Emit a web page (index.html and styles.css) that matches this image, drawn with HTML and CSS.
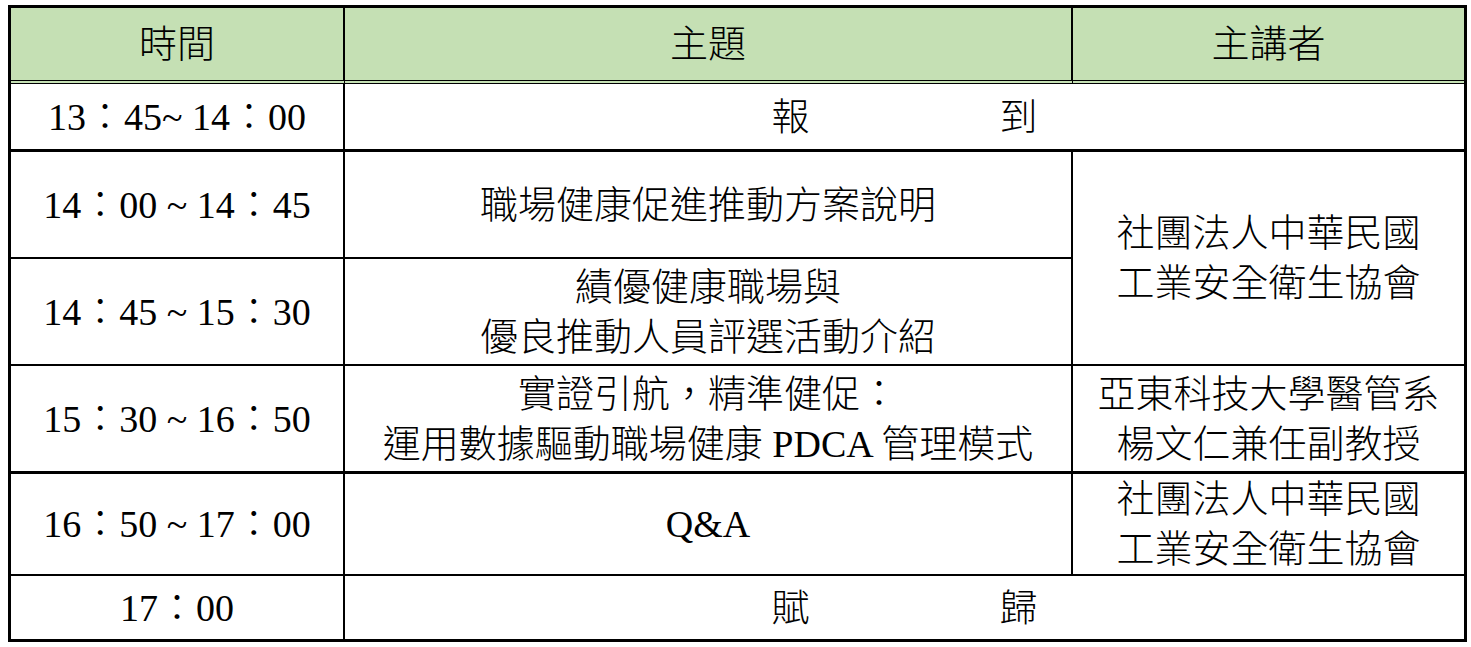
FILE: index.html
```html
<!DOCTYPE html>
<html lang="zh-Hant">
<head>
<meta charset="utf-8">
<title>議程</title>
<link rel="stylesheet" href="styles.css">
</head>
<body>
<div class="agenda">
  <div class="cell head c1">時間</div>
  <div class="cell head c2">主題</div>
  <div class="cell head c3">主講者</div>

  <div class="cell r1 c1">13：45~ 14：00</div>
  <div class="cell r1 wide">報　　　　　到</div>

  <div class="cell r2 c1">14：00 ~ 14：45</div>
  <div class="cell r2 c2">職場健康促進推動方案說明</div>
  <div class="cell c3 span2"><div>社團法人中華民國<br>工業安全衛生協會</div></div>

  <div class="cell r3 c1">14：45 ~ 15：30</div>
  <div class="cell r3 c2"><div>績優健康職場與<br>優良推動人員評選活動介紹</div></div>

  <div class="cell r4 c1">15：30 ~ 16：50</div>
  <div class="cell r4 c2"><div>實證引航，精準健促：<br>運用數據驅動職場健康 PDCA 管理模式</div></div>
  <div class="cell r4 c3"><div>亞東科技大學醫管系<br>楊文仁兼任副教授</div></div>

  <div class="cell r5 c1">16：50 ~ 17：00</div>
  <div class="cell r5 c2">Q&amp;A</div>
  <div class="cell r5 c3"><div>社團法人中華民國<br>工業安全衛生協會</div></div>

  <div class="cell r6 c1">17：00</div>
  <div class="cell r6 wide">賦　　　　　歸</div>
</div>
</body>
</html>
```

FILE: styles.css
```css
html, body {
  margin: 0;
  padding: 0;
  background: #ffffff;
}
body {
  padding: 5px 0 0 8px;
  font-family: "Liberation Serif", "Noto Sans CJK TC", serif;
  font-weight: 300;
  font-size: 38px;
  line-height: 50px;
  color: #000000;
}
.agenda {
  box-sizing: border-box;
  width: 1459px;
  border: 3px solid #000;
  display: grid;
  grid-template-columns: 334px 728px 391px;
  grid-template-rows: 76px 68px 107px 107px 108px 102px 63px;
}
.cell {
  box-sizing: border-box;
  display: flex;
  align-items: center;
  justify-content: center;
  text-align: center;
  white-space: nowrap;
}
.c1 {
  grid-column: 1;
  border-right: 2px solid #000;
}
.c2 {
  grid-column: 2;
  border-right: 2px solid #000;
}
.c3 {
  grid-column: 3;
}
.head {
  grid-row: 1;
  background: #c5e0b4;
  border-bottom: 4px double #000;
  padding-bottom: 0;
}
.wide {
  grid-column: 2 / span 2;
}
.r1 { grid-row: 2; border-bottom: 3px solid #000; }
.r2 { grid-row: 3; border-bottom: 2px solid #000; }
.span2 { grid-row: 3 / span 2; border-bottom: 2px solid #000; }
.r3 { grid-row: 4; border-bottom: 2px solid #000; }
.r4 { grid-row: 5; border-bottom: 3px solid #000; }
.r5 { grid-row: 6; border-bottom: 2px solid #000; }
.r6 { grid-row: 7; }
```
